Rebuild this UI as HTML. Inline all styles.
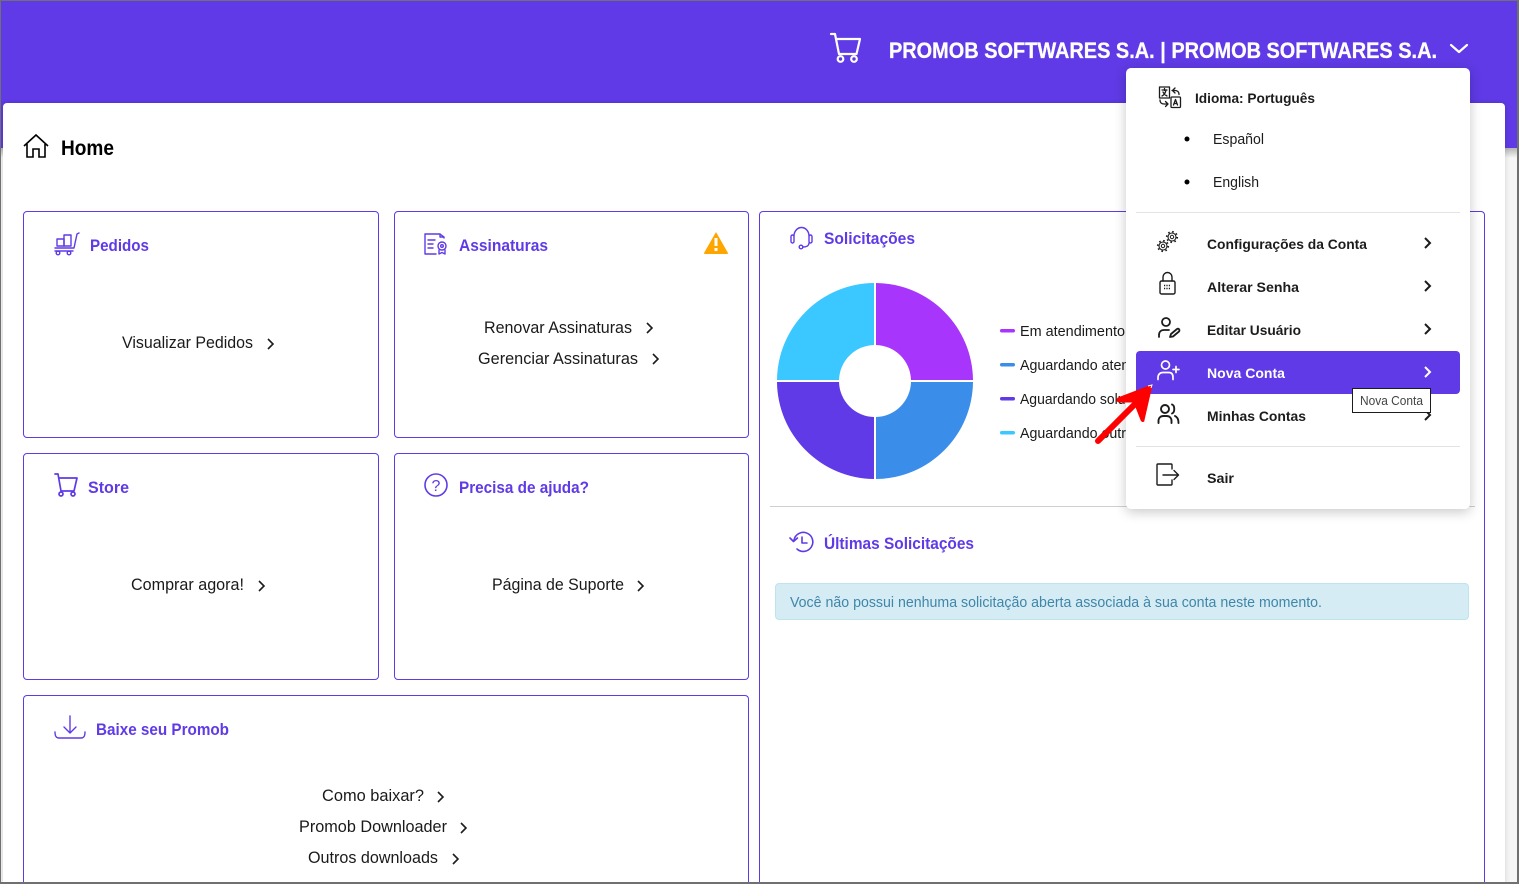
<!DOCTYPE html>
<html lang="pt"><head><meta charset="utf-8"><title>Home</title>
<style>
html,body{margin:0;padding:0;background:#fff;width:1519px;height:884px;overflow:hidden}
#w{position:relative;width:1519px;height:884px;overflow:hidden;font-family:"Liberation Sans",sans-serif}
.a{position:absolute;box-sizing:border-box}
.card{border:1px solid #5f3ae6;border-radius:4px;background:#fff}
.open{border-bottom:0;border-radius:4px 4px 0 0}
svg{position:absolute;left:0;top:0;display:block}
text{font-family:"Liberation Sans",sans-serif;white-space:pre}
.h{font-weight:bold;font-size:16.500px;fill:#5f3ae6}
.t{font-size:16.500px;fill:#1a1a1a}
.l{font-size:14.500px;fill:#1a1a1a}
.m{font-size:14px;font-weight:bold;fill:#1c1c1c}
.i{fill:none;stroke:#5f3ae6;stroke-width:1.4;stroke-linecap:round;stroke-linejoin:round}
.k{fill:none;stroke:#1c1c1c;stroke-width:1.4;stroke-linecap:round;stroke-linejoin:round}
.c{fill:none;stroke:#1c1c1c;stroke-width:1.6}
.cm{fill:none;stroke:#1c1c1c;stroke-width:2}
</style></head><body><div id="w">
<div class="a" style="left:0;top:0;width:1519px;height:148px;background:#5f3ae6"></div>
<div class="a" style="left:0;top:148px;width:1519px;height:736px;background:#f6f6f6"></div>
<div class="a" style="left:0;top:148px;width:1519px;height:10px;background:linear-gradient(#b5b5b5,#f6f6f6)"></div>
<div class="a" style="left:3px;top:103px;width:1502px;height:781px;background:#fff;border-radius:4px 4px 0 0;box-shadow:-2px 0 5px rgba(0,0,0,.08),2px 0 5px rgba(0,0,0,.08)"></div>
<div class="a card" style="left:23px;top:211px;width:356px;height:227px"></div>
<div class="a card" style="left:394px;top:211px;width:355px;height:227px"></div>
<div class="a card" style="left:23px;top:453px;width:356px;height:227px"></div>
<div class="a card" style="left:394px;top:453px;width:355px;height:227px"></div>
<div class="a card open" style="left:23px;top:695px;width:726px;height:189px"></div>
<div class="a card open" style="left:759px;top:211px;width:726px;height:673px"></div>
<div class="a" style="left:770px;top:506px;width:705px;height:1px;background:#cfcfcf"></div>
<div class="a" style="left:775px;top:583px;width:694px;height:37px;background:#d6ecf4;border:1px solid #bee5eb;border-radius:4px"></div>

<svg width="1519" height="884" viewBox="0 0 1519 884">
<!-- header -->
<g fill="none" stroke="#fff" stroke-width="2.2" stroke-linecap="round" stroke-linejoin="round">
<path d="M831 34h4l4 20h17.500l3.500-15H836"/><circle cx="840.500" cy="59" r="2.800"/><circle cx="854" cy="59" r="2.800"/>
<path d="M1451 45l8 7 8-7"/></g>
<text x="889" y="58" font-size="22" font-weight="bold" fill="#fff" stroke="#fff" stroke-width=".3" textLength="548" lengthAdjust="spacingAndGlyphs">PROMOB SOFTWARES S.A. | PROMOB SOFTWARES S.A.</text>
<!-- home -->
<path d="M24 146L36 135l12 11M27 144v13h6v-8h6v8h6v-13" fill="none" stroke="#000" stroke-width="1.600" stroke-linejoin="miter"/>
<text x="61" y="155" font-size="21" font-weight="bold" fill="#000" textLength="53" lengthAdjust="spacingAndGlyphs">Home</text>

<!-- Pedidos -->
<g class="i"><path d="M55 248h19l3-14 2-1M55 251h18"/><rect x="57" y="239" width="7" height="7"/><rect x="64" y="235" width="7" height="11"/><circle cx="58" cy="253" r="1.800"/><circle cx="69" cy="253" r="1.800"/></g>
<text class="h" x="90" y="251" textLength="59" lengthAdjust="spacingAndGlyphs">Pedidos</text>
<text class="t" x="122" y="348" textLength="131" lengthAdjust="spacingAndGlyphs">Visualizar Pedidos</text>
<path class="c" d="M268 339l5 5-5 5"/>

<!-- Assinaturas -->
<g class="i"><path d="M445 238v-1l-4-3h-15v20h11M441 234v3h4M429 240h7M429 244h5M429 248h5" transform="translate(-1 0)"/><circle cx="442" cy="246" r="4"/><circle cx="442" cy="246" r="1.300"/><path d="M439 250v4l3-1.500 3 1.500v-4"/></g>
<text class="h" x="459" y="251" textLength="89" lengthAdjust="spacingAndGlyphs">Assinaturas</text>
<path d="M716 232l12 21a1 1 0 0 1-1 1h-22a1 1 0 0 1-1-1z" fill="#ffa500"/>
<rect x="714.500" y="238" width="3" height="8" fill="#fff"/><rect x="714.500" y="248" width="3" height="3" fill="#fff"/>
<text class="t" x="484" y="333" textLength="148" lengthAdjust="spacingAndGlyphs">Renovar Assinaturas</text>
<path class="c" d="M647 323l5 5-5 5"/>
<text class="t" x="478" y="364" textLength="160" lengthAdjust="spacingAndGlyphs">Gerenciar Assinaturas</text>
<path class="c" d="M653 354l5 5-5 5"/>

<!-- Store -->
<g class="i" style="stroke-width:1.700"><path d="M55 474h3l3 17h13l3-13H59"/><circle cx="61" cy="494" r="2"/><circle cx="73" cy="494" r="2"/></g>
<text class="h" x="88" y="493" textLength="41" lengthAdjust="spacingAndGlyphs">Store</text>
<text class="t" x="131" y="590" textLength="113" lengthAdjust="spacingAndGlyphs">Comprar agora!</text>
<path class="c" d="M259 581l5 5-5 5"/>

<!-- Ajuda -->
<circle class="i" cx="436" cy="485" r="11" style="stroke-width:1.600"/>
<text x="431.500" y="491" font-size="16" fill="#5f3ae6">?</text>
<text class="h" x="459" y="493" textLength="130" lengthAdjust="spacingAndGlyphs">Precisa de ajuda?</text>
<text class="t" x="492" y="590" textLength="132" lengthAdjust="spacingAndGlyphs">Página de Suporte</text>
<path class="c" d="M638 581l5 5-5 5"/>

<!-- Baixe -->
<g class="i"><path d="M55 732c0 4 1 6 4 6h22c3 0 4-2 4-6M70 716v17M64 727l6 6 6-6"/></g>
<text class="h" x="96" y="735" textLength="133" lengthAdjust="spacingAndGlyphs">Baixe seu Promob</text>
<text class="t" x="322" y="801" textLength="102" lengthAdjust="spacingAndGlyphs">Como baixar?</text>
<path class="c" d="M438 792l5 5-5 5"/>
<text class="t" x="299" y="832" textLength="148" lengthAdjust="spacingAndGlyphs">Promob Downloader</text>
<path class="c" d="M461 823l5 5-5 5"/>
<text class="t" x="308" y="863" textLength="130" lengthAdjust="spacingAndGlyphs">Outros downloads</text>
<path class="c" d="M453 854l5 5-5 5"/>

<!-- Solicitacoes -->
<g class="i"><path d="M794 236a7.500 8.500 0 0 1 15 0"/><rect x="791" y="235" width="3" height="8" rx="1.500"/><rect x="809" y="235" width="3" height="8" rx="1.500"/><path d="M809 243c0 3-3 4-6 4"/><circle cx="801" cy="247" r="1.800"/></g>
<text class="h" x="824" y="244" textLength="91" lengthAdjust="spacingAndGlyphs">Solicitações</text>

<!-- Pie -->
<path d="M876 283A98 98 0 0 1 973 380H911A36 36 0 0 0 876 345Z" fill="#a835fb"/>
<path d="M973 382A98 98 0 0 1 876 479V417A36 36 0 0 0 911 382Z" fill="#3a8eea"/>
<path d="M874 479A98 98 0 0 1 777 382H839A36 36 0 0 0 874 417Z" fill="#5f3ae6"/>
<path d="M777 380A98 98 0 0 1 874 283V345A36 36 0 0 0 839 380Z" fill="#3bc7ff"/>

<rect x="1000" y="329" width="15" height="3.500" rx="1.700" fill="#a835fb"/>
<rect x="1000" y="363" width="15" height="3.500" rx="1.700" fill="#3a8eea"/>
<rect x="1000" y="397" width="15" height="3.500" rx="1.700" fill="#5f3ae6"/>
<rect x="1000" y="431" width="15" height="3.500" rx="1.700" fill="#3bc7ff"/>
<text class="l" x="1020" y="336" textLength="105" lengthAdjust="spacingAndGlyphs">Em atendimento</text>
<text class="l" x="1020" y="370" textLength="160" lengthAdjust="spacingAndGlyphs">Aguardando atendimento</text>
<text class="l" x="1020" y="404" textLength="128" lengthAdjust="spacingAndGlyphs">Aguardando solução</text>
<text class="l" x="1020" y="438" textLength="121" lengthAdjust="spacingAndGlyphs">Aguardando outros</text>

<!-- Ultimas -->
<g class="i" style="stroke-width:1.600"><path d="M794 540a9.500 9.500 0 1 1 3 9M790 538l3.500 3.500 4-3.500M802 537v6h5"/></g>
<text class="h" x="824" y="549" textLength="150" lengthAdjust="spacingAndGlyphs">Últimas Solicitações</text>
<text x="790" y="607" font-size="14.500" fill="#3f86a8" textLength="532" lengthAdjust="spacingAndGlyphs">Você não possui nenhuma solicitação aberta associada à sua conta neste momento.</text>
</svg>

<!-- dropdown -->
<div class="a" style="left:1126px;top:68px;width:344px;height:441px;background:#fff;border-radius:5px;box-shadow:0 3px 12px rgba(0,0,0,.22)"></div>
<div class="a" style="left:1136px;top:212px;width:324px;height:1px;background:#e3e3e3"></div>
<div class="a" style="left:1136px;top:446px;width:324px;height:1px;background:#e3e3e3"></div>
<div class="a" style="left:1136px;top:351px;width:324px;height:43px;background:#5f3ae6;border-radius:4px"></div>

<svg width="1519" height="884" viewBox="0 0 1519 884">
<!-- language icon -->
<g class="k" style="stroke-width:1.300"><rect x="1159.500" y="87" width="10" height="11"/><path d="M1162 90h5M1164.500 88.500v2M1166 90c-.5 3-2 5-4 6M1163 92c1 2 2 3 4 4"/><rect x="1171" y="97" width="9.500" height="10.500" rx="1"/><path d="M1173.500 105l2-5.500 2 5.500M1174 103.500h3"/><path d="M1172 90.500h3c2 0 4 1 4 4M1172.500 90.500l2.500-2.500M1172.500 90.500l2.500 2.500M1160 100c0 3 2 4 4 4h4M1168 104l-2.500-2.500M1168 104l-2.500 2.500"/></g>
<text class="m" x="1195" y="103" textLength="120" lengthAdjust="spacingAndGlyphs">Idioma: Português</text>
<circle cx="1187" cy="139" r="2.500" fill="#000"/>
<circle cx="1187" cy="182" r="2.500" fill="#000"/>
<text x="1213" y="144" font-size="14.500" fill="#1c1c1c" textLength="51" lengthAdjust="spacingAndGlyphs">Español</text>
<text x="1213" y="187" font-size="14.500" fill="#1c1c1c" textLength="46" lengthAdjust="spacingAndGlyphs">English</text>

<!-- gears -->
<g fill="none" stroke="#1c1c1c"><circle cx="1172" cy="237" r="4" stroke-width="1.100"/><circle cx="1172" cy="237" r="1.700" stroke-width="1"/><circle cx="1172" cy="237" r="5.300" stroke-width="1.600" stroke-dasharray="1.600 2.560"/><circle cx="1163" cy="246" r="4" stroke-width="1.100"/><circle cx="1163" cy="246" r="1.700" stroke-width="1"/><circle cx="1163" cy="246" r="5.300" stroke-width="1.600" stroke-dasharray="1.600 2.560"/></g>
<text class="m" x="1207" y="249" textLength="160" lengthAdjust="spacingAndGlyphs">Configurações da Conta</text>
<path class="cm" d="M1425 238l5 5-5 5"/>

<!-- lock -->
<g class="k"><rect x="1160" y="281" width="15" height="13" rx="1.500"/><path d="M1163 281v-4a4.500 4.500 0 0 1 9 0v4"/><path d="M1164 285.500h7M1164 288.500h7" stroke-dasharray="1.200 1.200" stroke-linecap="butt"/></g>
<text class="m" x="1207" y="292" textLength="92" lengthAdjust="spacingAndGlyphs">Alterar Senha</text>
<path class="cm" d="M1425 281l5 5-5 5"/>

<!-- edit user -->
<g class="k" style="stroke-width:1.800"><circle cx="1166" cy="322" r="4"/><path d="M1159 337v-2c0-3 2-5 5-5h5M1170 337l1-3 6-5c2-1 3 1 2 2.500l-6 5z"/></g>
<text class="m" x="1207" y="335" textLength="94" lengthAdjust="spacingAndGlyphs">Editar Usuário</text>
<path class="cm" d="M1425 324l5 5-5 5"/>

<!-- new account -->
<g fill="none" stroke="#fff" stroke-width="1.700" stroke-linecap="round"><circle cx="1165.500" cy="365" r="4"/><path d="M1158 379.500v-2c0-3 2-5 5-5h6c3 0 4 2 4 5v2M1173 369.500h6M1176 366.500v6"/></g>
<text class="m" x="1207" y="378" textLength="78" lengthAdjust="spacingAndGlyphs" style="fill:#fff">Nova Conta</text>
<path class="cm" d="M1425 367l5 5-5 5" style="stroke:#fff"/>

<!-- accounts -->
<g class="k" style="stroke-width:1.900"><circle cx="1165" cy="409" r="4"/><path d="M1158.500 423v-2c0-3 2-5 5-5h3c3 0 5 2 5 5v2M1172 404.500c3 1 3 8 0 9M1175 416c2.500 1 3.500 3 3.500 7"/></g>
<text class="m" x="1207" y="421" textLength="99" lengthAdjust="spacingAndGlyphs">Minhas Contas</text>
<path class="cm" d="M1425 410l5 5-5 5"/>

<!-- exit -->
<g class="k"><path d="M1172 469v-4a1 1 0 0 0-1-1h-13a1 1 0 0 0-1 1v19a1 1 0 0 0 1 1h13a1 1 0 0 0 1-1v-4M1163 475h15M1174 470.500l4.500 4.500-4.500 4.500"/></g>
<text class="m" x="1207" y="483" textLength="27" lengthAdjust="spacingAndGlyphs">Sair</text>

<!-- red arrow -->
<path d="M1098 441L1138 401" stroke="#ff0000" stroke-width="6" stroke-linecap="round" fill="none"/>
<path d="M1152 385L1118 398c-2 2-1 4 2 4L1134 402L1141 420c1 2 3 2 3 0Z" fill="#ff0000" stroke="#ff0000" stroke-width="1" stroke-linejoin="round"/>
<path d="M1148 386l4-1-1 3" stroke="#fff" stroke-width="1" fill="none"/>

<!-- tooltip -->
<rect x="1352.500" y="388.500" width="78" height="24" fill="#fff" stroke="#1c1c1c"/>
<text x="1360" y="405" font-size="12.500" fill="#444" textLength="63" lengthAdjust="spacingAndGlyphs">Nova Conta</text>
</svg>

<!-- window frame -->
<div class="a" style="left:0;top:0;width:1519px;height:884px;border:1px solid #707070;border-width:1px 2px 2px 1px;pointer-events:none"></div>
</div></body></html>
